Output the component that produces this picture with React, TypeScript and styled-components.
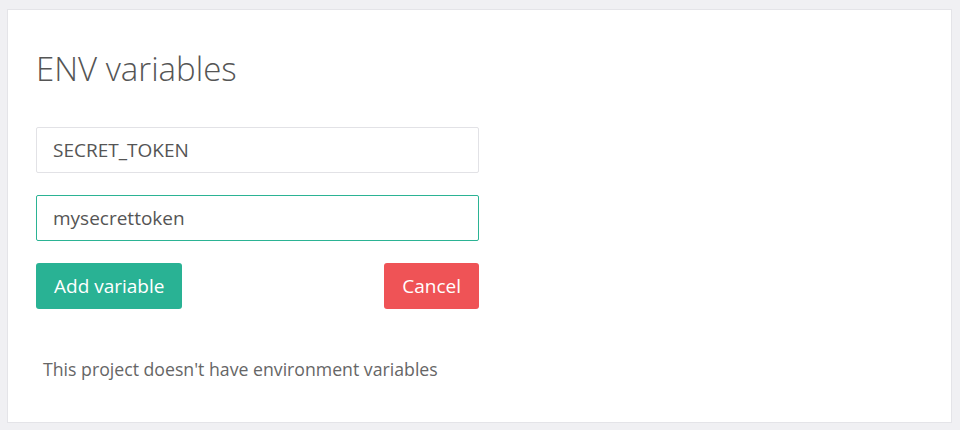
import React from 'react';
import styled, { createGlobalStyle } from 'styled-components';

const GlobalStyle = createGlobalStyle`
  html, body {
    margin: 0;
    padding: 0;
    background: #f0f0f3;
    font-family: 'Open Sans', 'Liberation Sans', sans-serif;
  }
`;

const Page = styled.div`
  padding: 9px 8px 8px 7px;
  box-sizing: border-box;
  height: 430px;
`;

const Card = styled.section`
  background: #fff;
  border: 1px solid #e4e4e8;
  box-sizing: border-box;
  height: 414px;
  width: 945px;
  padding: 37px 28px 0 28px;
`;

const Title = styled.h1`
  margin: 0 0 36px 0;
  font-size: 33px;
  font-weight: 300;
  color: #555;
  line-height: 44px;
`;

const Form = styled.form`
  width: 443px;
  display: flex;
  flex-direction: column;
  gap: 22px;
`;

const Input = styled.input<{ $focused?: boolean }>`
  height: 46px;
  box-sizing: border-box;
  border: 1px solid ${(p) => (p.$focused ? '#2bb394' : '#e2e2e6')};
  border-radius: 2px;
  padding: 0 16px;
  font-family: inherit;
  font-size: 19px;
  color: #555;
  outline: none;
`;

const Actions = styled.div`
  display: flex;
  justify-content: space-between;
`;

const Button = styled.button<{ $variant: 'primary' | 'danger' }>`
  height: 46px;
  border: none;
  border-radius: 3px;
  padding: 0 18px;
  font-family: inherit;
  font-size: 19px;
  color: #fff;
  background: ${(p) => (p.$variant === 'primary' ? '#29b294' : '#ef5356')};
  cursor: pointer;
`;

const Empty = styled.p`
  margin: 48px 0 0 7px;
  font-size: 17.7px;
  color: #666;
`;

export default function App() {
  return (
    <>
      <GlobalStyle />
      <Page>
        <Card>
          <Title>ENV variables</Title>
          <Form onSubmit={(e) => e.preventDefault()}>
            <Input defaultValue="SECRET_TOKEN" />
            <Input $focused defaultValue="mysecrettoken" />
            <Actions>
              <Button type="submit" $variant="primary">Add variable</Button>
              <Button type="button" $variant="danger">Cancel</Button>
            </Actions>
          </Form>
          <Empty>This project doesn't have environment variables</Empty>
        </Card>
      </Page>
    </>
  );
}
